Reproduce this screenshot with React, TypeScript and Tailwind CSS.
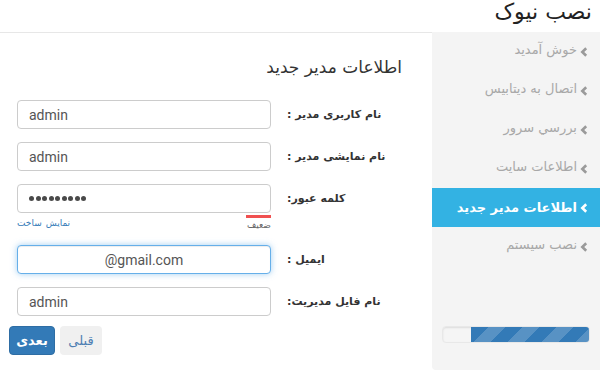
import React from "react";

const steps = [
  "خوش آمدید",
  "اتصال به دیتابیس",
  "بررسي سرور",
  "اطلاعات سايت",
  "اطلاعات مدیر جدید",
  "نصب سیستم",
];

const fa = { fontFamily: "Tahoma, 'DejaVu Sans', sans-serif" };

function Chevron({ className }: { className?: string }) {
  return (
    <svg width="8" height="10" viewBox="0 0 8 10" className={className}>
      <path d="M6.2 1.2 L2.3 5 L6.2 8.8" fill="none" stroke="currentColor" strokeWidth="2.6" strokeLinejoin="miter" />
    </svg>
  );
}

function Input({ value, focus }: { value: string; focus?: boolean }) {
  return (
    <input
      dir="ltr"
      readOnly
      value={value}
      className={
        "w-[254px] h-[29px] shrink-0 rounded-[4px] border bg-white px-[11px] text-[14px] text-[#555] outline-none " +
        (focus
          ? "border-[#66afe9] text-center shadow-[inset_0_1px_1px_rgba(0,0,0,.075),0_0_6px_rgba(102,175,233,.6)]"
          : "border-[#ccc]")
      }
      style={{ fontFamily: "Roboto, sans-serif" }}
    />
  );
}

function Row({ label, children }: { label: string; children: React.ReactNode }) {
  return (
    <div className="flex items-center">
      <div className="w-[115px] shrink-0 flex pt-[2px]">
        <span className="text-[11px] font-bold text-[#333] mr-auto whitespace-nowrap" style={fa}>
          {label}
        </span>
      </div>
      <div className="w-[16px] shrink-0" />
      {children}
    </div>
  );
}

export default function App() {
  return (
    <div dir="rtl" className="w-[600px] h-[372px] bg-white flex flex-col overflow-hidden" style={fa}>
      <div className="h-[32px] shrink-0 flex items-start pr-[8px]">
        <h1 className="text-[22px] leading-[24px] text-[#222]">نصب نیوک</h1>
      </div>
      <div className="flex flex-1 min-h-0">
        <aside className="w-[168px] shrink-0 bg-[#f4f4f4] rounded-bl-[4px] mb-[2px] flex flex-col">
          {steps.map((s, i) => {
            const active = i === 4;
            return (
              <div
                key={s}
                className={
                  "h-[39px] shrink-0 flex items-center pr-[12px] gap-[3px] text-[13px] " +
                  (active ? "bg-[#33b2e3] text-white font-bold" : "text-[#a8a8a8]")
                }
              >
                <Chevron className={active ? "text-white" : "text-[#9a9a9a]"} />
                <span className={active ? "" : "-mt-[3px]"}>{s}</span>
              </div>
            );
          })}
          <div className="flex-1" />
          <div className="mx-[10px] mb-[27px] h-[17px] rounded-[4px] bg-[#f5f5f5] border border-[#e8e8e8] shadow-[inset_0_1px_2px_rgba(0,0,0,.1)] overflow-hidden flex">
            <div className="w-[81%] h-full bg-[#337ab7] bg-[linear-gradient(-45deg,rgba(255,255,255,.18)_25%,transparent_25%,transparent_50%,rgba(255,255,255,.18)_50%,rgba(255,255,255,.18)_75%,transparent_75%,transparent)] bg-[length:34px_34px]" />
          </div>
        </aside>
        <main className="flex-1 border-t border-[#e7e7e7] pr-[30px] pl-[17px] flex flex-col">
          <h2 className="mt-[22px] text-[17px] leading-[24px] text-[#333]">اطلاعات مدیر جدید</h2>
          <div className="mt-[21px] flex flex-col gap-[13px]">
            <Row label="نام کاربری مدیر :">
              <Input value="admin" />
            </Row>
            <Row label="نام نمایشی مدیر :">
              <Input value="admin" />
            </Row>
            <div>
              <Row label="کلمه عبور:">
                <div className="w-[254px] h-[29px] shrink-0 rounded-[4px] border border-[#ccc] bg-white px-[11px] flex items-center gap-[1.5px]" dir="ltr">
                  {Array.from({ length: 9 }).map((_, i) => (
                    <span key={i} className="w-[5px] h-[5px] rounded-full bg-[#4a4a4a]" />
                  ))}
                </div>
              </Row>
              <div className="flex justify-between items-start w-[254px] mr-auto h-[13px]">
                <div className="w-[25px] pt-[2px]">
                  <div className="w-[25px] border-t-[3px] border-[#f05050]" />
                  <div className="text-[9px] text-[#666] leading-[10px] mt-[2px]">ضعیف</div>
                </div>
                <div className="flex gap-[4px] text-[9px] text-[#337ab7] leading-[10px] mt-[5px]">
                  <span>نمایش</span>
                  <span>ساخت</span>
                </div>
              </div>
            </div>
            <div className="mt-[6px]">
              <Row label="ایمیل :">
                <Input value="@gmail.com" focus />
              </Row>
            </div>
            <Row label="نام فایل مدیریت:">
              <Input value="admin" />
            </Row>
          </div>
          <div className="flex justify-end gap-[5px] mt-[10px] -ml-[8px]">
            <button className="w-[42px] h-[29px] rounded-[4px] bg-[#f0f0f0] text-[#4f7fb3] text-[13px]">قبلی</button>
            <button className="w-[46px] h-[29px] rounded-[4px] bg-[#337ab7] border border-[#2e6da4] text-white text-[13px] font-bold">بعدی</button>
          </div>
        </main>
      </div>
    </div>
  );
}
